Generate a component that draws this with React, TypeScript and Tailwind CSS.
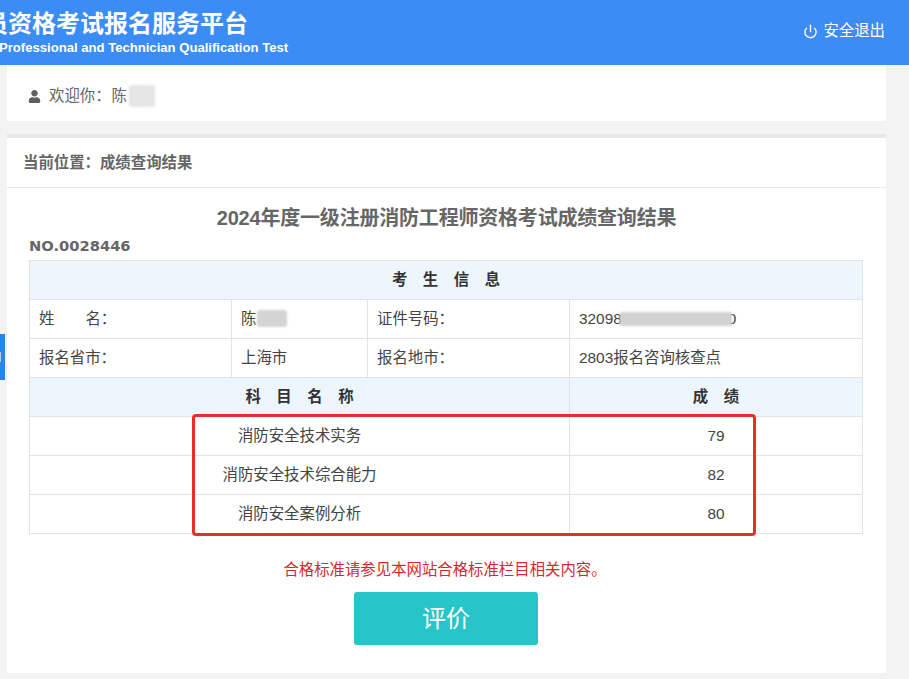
import { Power } from 'lucide-react'
import { FaUser } from 'react-icons/fa'

const cell = 'border border-[#e3e3e3] px-[9px] align-middle font-normal'
const headCell = 'border border-[#e3e3e3] bg-[#edf6fd] text-center align-middle font-bold text-[#333]'

const scores = [
  { name: '消防安全技术实务', score: 79 },
  { name: '消防安全技术综合能力', score: 82 },
  { name: '消防安全案例分析', score: 80 },
]

function Spaced({ text }: { text: string }) {
  return (
    <span className="inline-flex justify-center gap-[15.5px]">
      {text.split('').map((c) => (
        <span key={c}>{c}</span>
      ))}
    </span>
  )
}

export default function App() {
  return (
    <div className="relative h-[679px] w-[909px] overflow-hidden bg-[#f3f3f3] font-['Liberation_Sans','Noto_Sans_CJK_SC',sans-serif] text-[15.4px] text-[#555]">
      {/* Header */}
      <header className="flex h-[65px] items-center justify-between bg-[#3c8cf5] pr-[24px] text-white">
        <div className="-ml-[16px] -mt-[3px] whitespace-nowrap">
          <div className="text-[24px] leading-[34px] font-bold">员资格考试报名服务平台</div>
          <div className="ml-[15px] text-[13.1px] leading-[14px] font-bold">Professional and Technician Qualification Test</div>
        </div>
        <div className="-mt-[3px] flex items-center gap-[5px]">
          <Power size={15} strokeWidth={2.2} className="mt-[1px]" />
          <span>安全退出</span>
        </div>
      </header>

      <main className="ml-[7px] w-[879px]">
        {/* Welcome */}
        <div className="flex h-[56px] items-center gap-[8px] bg-white pl-[21px] pt-[6px] text-[#666]">
          <FaUser size={13} className="text-[#5f5f5f]" />
          <span className="flex items-center">
            欢迎你：
            <span className="ml-[1px]">陈</span>
            <span className="ml-[2px] inline-block h-[22px] w-[26px] rounded-[3px] bg-[#e6e6e6] blur-[1px]" />
          </span>
        </div>

        {/* Result panel */}
        <section className="mt-[13px] h-[539px] border-t-[4px] border-[#e8e8e8] bg-white">
          <div className="flex h-[50px] items-center border-b border-[#e8e8e8] pl-[16px] font-bold text-[#666]">
            当前位置：成绩查询结果
          </div>
          <h1 className="mt-[16px] text-center text-[20px] leading-[28px] font-bold tracking-[-0.2px] text-[#666]">
            2024年度一级注册消防工程师资格考试成绩查询结果
          </h1>
          <div className="ml-[22px] mt-[4px] font-['DejaVu_Sans',sans-serif] text-[14.7px] leading-[20px] font-bold text-[#666]">NO.0028446</div>
          <table className="ml-[22px] mt-[4px] w-[834px] table-fixed border-collapse text-[#444]">
            <colgroup>
              <col className="w-[202px]" />
              <col className="w-[136px]" />
              <col className="w-[202px]" />
              <col />
            </colgroup>
            <tbody>
              <tr className="h-[39px]">
                <th colSpan={4} className={headCell}><Spaced text="考生信息" /></th>
              </tr>
              <tr className="h-[39px]">
                <td className={cell}>姓<span className="inline-block w-[31px]" />名：</td>
                <td className={cell}>
                  <span className="flex items-center">
                    陈
                    <span className="ml-[1px] inline-block h-[17px] w-[30px] rounded-[3px] bg-[#d4d4d4] blur-[1px]" />
                  </span>
                </td>
                <td className={cell}>证件号码：</td>
                <td className={cell}>
                  <span className="flex items-center">
                    32098
                    <span className="relative z-10 -mr-[4px] -ml-[2px] inline-block h-[14px] w-[112px] bg-[#d2d2d2] blur-[1px]" />
                    <span>0</span>
                  </span>
                </td>
              </tr>
              <tr className="h-[39px]">
                <td className={cell}>报名省市：</td>
                <td className={cell}>上海市</td>
                <td className={cell}>报名地市：</td>
                <td className={cell}>2803报名咨询核查点</td>
              </tr>
              <tr className="h-[39px]">
                <th colSpan={3} className={headCell}><Spaced text="科目名称" /></th>
                <th className={headCell}><Spaced text="成绩" /></th>
              </tr>
              {scores.map((row) => (
                <tr key={row.name} className="h-[39px]">
                  <td colSpan={3} className={`${cell} text-center`}>{row.name}</td>
                  <td className={`${cell} text-center`}>{row.score}</td>
                </tr>
              ))}
            </tbody>
          </table>
          <p className="mt-[26px] ml-[-3px] text-center leading-[20px] text-[#d62a2a]">合格标准请参见本网站合格标准栏目相关内容。</p>
          <button className="mt-[12px] ml-[347px] block h-[53px] w-[184px] rounded-[3px] bg-[#26c6c8] text-[24px] text-white">评价</button>
        </section>
      </main>

      {/* Side tab */}
      <div className="absolute left-0 top-[334px] flex h-[46px] w-[5px] items-center bg-[#2a84ee]">
        <div className="h-[10px] w-[1px] bg-white/60" />
      </div>
      {/* Red annotation */}
      <div className="absolute left-[192px] top-[414px] h-[122px] w-[564px] rounded-[4px] border-[3px] border-[#e53027]" />
    </div>
  )
}
